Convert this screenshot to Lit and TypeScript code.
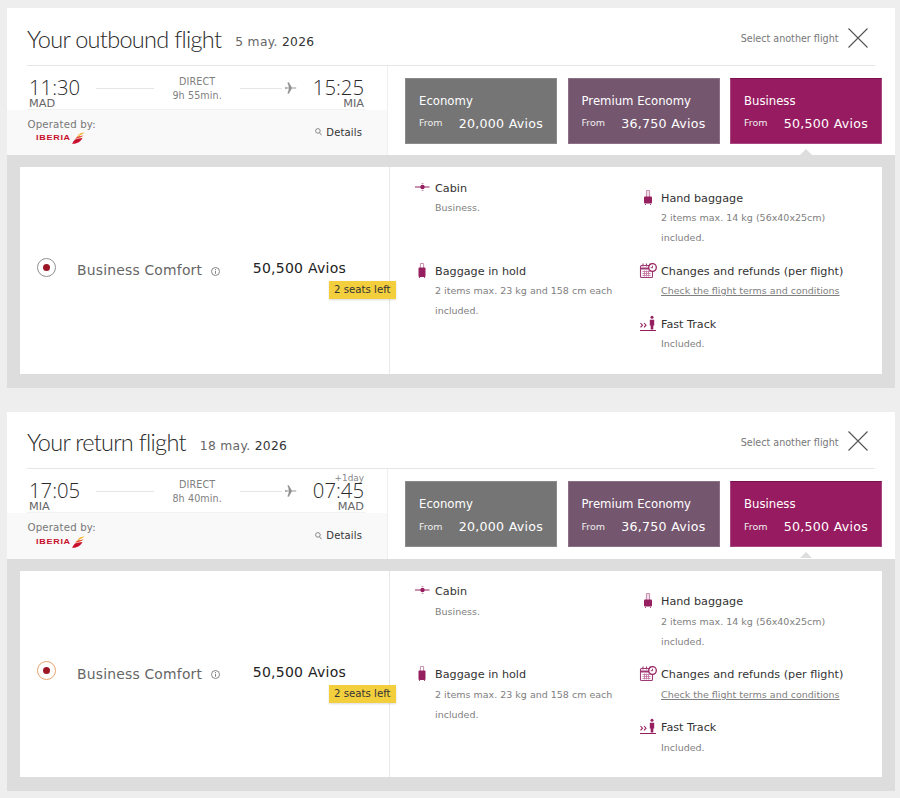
import { LitElement, html, css } from "lit";
import { customElement, property } from "lit/decorators.js";

const suitcase = (tall: boolean) => html`<svg class="ic" width="20" height="18" viewBox="0 0 20 18">
  <path d="M8.400 ${tall ? 7 : 8}V1.500h3.200V${tall ? 7 : 8}" fill="${tall ? "none" : "#f0dbe7"}" stroke="#c48fae" stroke-width="1"/>
  <rect x="${tall ? 6.5 : 6}" y="${tall ? 5.5 : 7.5}" width="${tall ? 7 : 8}" height="${tall ? 9.5 : 7}" rx="1" fill="#96205f"/>
  <path d="M7.500 15v1M12.500 15v1" stroke="#96205f" stroke-width=".8"/>
</svg>`;

const cabin = html`<svg class="ic" width="20" height="14" viewBox="0 0 20 14">
  <path d="M3 8h14.500" stroke="#96205f" stroke-width="1"/>
  <circle cx="10.500" cy="8" r="2.200" fill="#96205f"/>
  <path d="M9.500 4.500h2M9.500 11.500h2" stroke="#c99ab4" stroke-width="1.200"/>
</svg>`;

const calendar = html`<svg class="ic" width="20" height="18" viewBox="0 0 20 18">
  <rect x="2.500" y="3.500" width="12" height="12" rx="1" fill="#fff" stroke="#a03a75" stroke-width="1.100"/>
  <path d="M2.500 6.500h12" stroke="#a03a75" stroke-width="2"/>
  <path d="M5 1.500v3M8.500 1.500v3M12 1.500v3" stroke="#a03a75" stroke-width="1.100"/>
  <path d="M4.500 9.500h8M4.500 11.500h8M4.500 13.500h8M6.500 8.500v6M8.500 8.500v6M10.500 8.500v6" stroke="#c67aa6" stroke-width=".9"/>
  <circle cx="14.500" cy="5.500" r="3.800" fill="#fff" stroke="#96205f" stroke-width="1.300"/>
  <path d="M14.500 3.700v2h-1.800" fill="none" stroke="#96205f" stroke-width=".9"/>
</svg>`;

const fast = html`<svg class="ic" width="20" height="18" viewBox="0 0 20 18">
  <path d="M2.500 8l2 2.200-2 2.200M6 8l2 2.200-2 2.200" fill="none" stroke="#96205f" stroke-width="1.100"/>
  <circle cx="14" cy="2.300" r="1.500" fill="#96205f"/>
  <path d="M11.800 4.800h4.400v5.800h-.9v3.900h-2.600v-3.900h-.9z" fill="#96205f"/>
  <path d="M2 15.500h16" stroke="#96205f" stroke-width="1"/>
</svg>`;

const plane = html`<svg class="plane" width="12" height="12" viewBox="0 0 12 12">
  <path d="M0 5.200h1l1 .6h2.200L2.700 0.600h1.100l3 5.200h2.900c.9 0 1.600.1 1.600.2s-.7.2-1.600.2H6.800l-3 5.200H2.700l1.500-5.200H2l-1 .6H0l.6-.8z" fill="#8e8e8e" stroke="#8e8e8e" stroke-width=".3"/>
</svg>`;

@customElement("flight-card")
class FlightCard extends LitElement {
  @property() heading = "";
  @property() day = "";
  @property() dep = "";
  @property() depCode = "";
  @property() arr = "";
  @property() arrCode = "";
  @property() dur = "";
  @property() extra = "";
  @property() ring = "#8f8f8f";

  static styles = css`
    :host { display: block; font-family: "DejaVu Sans", Verdana, sans-serif; color: #222; }
    .top { background: #fff; height: 57.6px; padding: 0 20px; display: flex; }
    .top-in { flex: 1; display: flex; align-items: center; border-bottom: 1px solid #e6e6e6; padding: 5px 7px 0 0; box-sizing: border-box; }
    h2 { margin: 0; padding-top: 1px; font: 300 23.5px/1 Lato, sans-serif; color: #2a2a2a; letter-spacing: -.7px; }
    .date { margin-left: 14px; font-size: 12.3px; color: #666; padding-top: 7px; letter-spacing: .3px; }
    .date b { font-weight: 400; color: #333; }
    .sel { margin-left: auto; font-size: 9.6px; color: #777; }
    .x { margin: 0 0 2px 9.5px; display: block; }
    .row { display: flex; background: #fff; height: 89.4px; }
    .left { width: 380px; border-right: 1px solid #efefef; display: flex; flex-direction: column; }
    .times { height: 44px; margin: 0 21px 0 20px; display: flex; align-items: flex-end; border-bottom: 1px solid #f2f2f2; box-sizing: border-box; }
    .t { display: flex; flex-direction: column; padding: 0 2px; margin-bottom: -1px; }
    .t.r { text-align: right; margin-left: auto; }
    .hm { font: 300 20.3px/16px "Open Sans", sans-serif; color: #2a2a2a; }
    .code { font-size: 11.3px; line-height: 12px; color: #666; margin-top: 3px; }
    .plus { font-size: 8.9px; color: #888; line-height: 6px; margin-bottom: 1px; }
    .ln { height: 1px; background: #e6e6e6; align-self: flex-start; margin-top: 22px; }
    .ln.a { width: 58px; margin-left: 14px; }
    .ln.b { width: 42px; }
    .plane { align-self: flex-start; margin: 16px 0 0 3px; }
    .mid { width: 86px; text-align: center; align-self: flex-start; font-size: 9.6px; line-height: 14px; color: #808080; padding-top: 9px; letter-spacing: .1px; }
    .ops { flex: 1; background: #f9f9f9; display: flex; padding: 0 25px 0 20.5px; justify-content: space-between; }
    .op { font-size: 10.2px; color: #777; padding-top: 8px; line-height: 14px; letter-spacing: .17px; }
    .logo { display: flex; align-items: center; margin-left: 8px; height: 13px; }
    .logo span { font: 700 7.5px/1 "Liberation Sans", sans-serif; color: #c8102e; letter-spacing: .6px; transform: scaleX(1.2); transform-origin: left; width: 35px; }
    .det { display: flex; align-items: center; font-size: 10px; color: #333; height: 45px; letter-spacing: .15px; gap: 4px; }
    .fares { flex: 1; display: flex; padding: 12px 13px 0 17px; gap: 10.5px; }
    .fare { flex: 1; height: 66px; box-sizing: border-box; color: #fff; padding: 15px 13px 0; border: 1px solid; position: relative; }
    .fare.e { background: #757575; border-color: #8b8b8b; }
    .fare.p { background: #75566f; border-color: #8c7086; }
    .fare.b { background: #971b60; border-color: #a84880; border-top-color: #7a1050; }
    .fn { font-size: 11.7px; line-height: 14px; }
    .fp { display: flex; justify-content: space-between; align-items: center; margin-top: 8px; }
    .fr { font-size: 9.5px; color: #eee; margin-top: -2px; }
    .fa { font-size: 12.6px; line-height: 16px; letter-spacing: .25px; }
    .fare.b::after { content: ""; position: absolute; left: 69px; bottom: -12px; border: 6px solid transparent; border-top: 0; border-bottom-color: #ddd; }
    .panel { background: #ddd; padding: 12px 13px 14px; }
    .inner { background: #fff; display: flex; height: 206.6px; }
    .offer { width: 370px; border-right: 1px solid #e8e8e8; box-sizing: border-box; position: relative; display: flex; align-items: center; padding-left: 17px; }
    .radio { width: 19px; height: 19px; border: 1px solid; border-radius: 50%; box-sizing: border-box; display: flex; align-items: center; justify-content: center; margin-top: -6px; }
    .radio i { width: 7px; height: 7px; border-radius: 50%; background: #9d1626; display: block; }
    .name { margin-left: 21px; font-size: 13.9px; color: #666; letter-spacing: .2px; }
    .info { margin-left: 9px; margin-top: 2px; display: block; }
    .pr { margin-left: auto; align-self: flex-start; margin-top: 91px; font-size: 14px; color: #222; margin-right: 43px; letter-spacing: .25px; line-height: 20px; }
    .seats { position: absolute; left: 309px; top: 114px; background: #f4cf3d; font-size: 10.2px; color: #333; padding: 0 5px; line-height: 18px; white-space: nowrap; box-shadow: 0 1px 2px rgba(0,0,0,.15); }
    .info-cols { flex: 1; display: flex; padding-left: 24px; }
    .col { display: flex; flex-direction: column; }
    .c1 { width: 226px; padding-top: 11.6px; }
    .c2 { padding-top: 21.6px; }
    .it { position: relative; padding-left: 21px; }
    .ic { position: absolute; left: -2px; top: 0; display: block; }
    .c1 .it + .it { margin-top: 43.5px; }
    .c2 .it + .it { margin-top: 13.6px; }
    .tt { font-size: 11.2px; line-height: 19.5px; color: #333; white-space: nowrap; }
    .ds { font-size: 9.5px; line-height: 20px; color: #808080; white-space: nowrap; }
    .ds a { color: #808080; text-decoration: underline; }
  `;

  render() {
    const item = (icon: unknown, t: string, d: unknown) => html`<div class="it">${icon}<div class="tt">${t}</div><div class="ds">${d}</div></div>`;
    const fare = (k: string, n: string, a: string) => html`<div class="fare ${k}"><div class="fn">${n}</div><div class="fp"><span class="fr">From</span><span class="fa">${a} Avios</span></div></div>`;
    return html`
      <div class="top"><div class="top-in">
        <h2>${this.heading}</h2>
        <div class="date">${this.day} <b>2026</b></div>
        <div class="sel">Select another flight</div>
        <svg class="x" width="20" height="20" viewBox="0 0 20 20"><path d="M.5.5l19 19M19.500.5l-19 19" stroke="#555" stroke-width="1.100"/></svg>
      </div></div>
      <div class="row">
        <div class="left">
          <div class="times">
            <div class="t"><span class="hm">${this.dep}</span><span class="code">${this.depCode}</span></div>
            <div class="ln a"></div>
            <div class="mid">DIRECT<br />${this.dur}</div>
            <div class="ln b"></div>
            ${plane}
            <div class="t r">${this.extra ? html`<span class="plus">${this.extra}</span>` : ""}<span class="hm">${this.arr}</span><span class="code">${this.arrCode}</span></div>
          </div>
          <div class="ops">
            <div class="op">Operated by:
              <div class="logo"><span>IBERIA</span>
                <svg width="14" height="12" viewBox="0 0 14 12"><path d="M9 1.500c1.500-.5 3-.8 4.500-.9C12.500 1.500 11 2.500 9.500 3 8.500 3.400 7.500 3.800 6.500 4.500 7 3.300 8 2.100 9 1.500z" fill="#f2b632"/><path d="M6 4.800c2-.8 4.500-1.200 6.500-1.300-1 1-3 2.100-5 2.500-1.300.3-2.300.6-3.200 1 .4-.9 1-1.700 1.700-2.200z" fill="#e2542a"/><path d="M4 7.600c2.500-1 5-1.600 7.500-1.700C10.500 8 8.500 10 6 11c-2 .7-3.500 .8-5 .8C2 10.500 2.800 8.600 4 7.600z" fill="#c8102e"/></svg>
              </div>
            </div>
            <div class="det"><svg width="7" height="8" viewBox="0 0 7 8"><circle cx="2.900" cy="2.900" r="2.300" fill="none" stroke="#888"/><path d="M4.500 4.700L6.600 7.300" stroke="#888"/></svg>Details</div>
          </div>
        </div>
        <div class="fares">
          ${fare("e", "Economy", "20,000")}
          ${fare("p", "Premium Economy", "36,750")}
          ${fare("b", "Business", "50,500")}
        </div>
      </div>
      <div class="panel"><div class="inner">
        <div class="offer">
          <div class="radio" style="border-color:${this.ring}"><i></i></div>
          <span class="name">Business Comfort</span>
          <svg class="info" width="9" height="9" viewBox="0 0 9 9"><circle cx="4.500" cy="4.500" r="4" fill="none" stroke="#777" stroke-width=".9"/><path d="M4.500 3.800v3M4.500 2v1" stroke="#777" stroke-width=".9"/></svg>
          <span class="pr">50,500 Avios</span>
          <div class="seats">2 seats left</div>
        </div>
        <div class="info-cols">
          <div class="col c1">
            ${item(cabin, "Cabin", "Business.")}
            ${item(suitcase(true), "Baggage in hold", html`2 items max. 23 kg and 158 cm each<br />included.`)}
          </div>
          <div class="col c2">
            ${item(suitcase(false), "Hand baggage", html`2 items max. 14 kg (56x40x25cm)<br />included.`)}
            ${item(calendar, "Changes and refunds (per flight)", html`<a>Check the flight terms and conditions</a>`)}
            ${item(fast, "Fast Track", "Included.")}
          </div>
        </div>
      </div></div>
    `;
  }
}

@customElement("app-root")
class AppRoot extends LitElement {
  static styles = css`
    :host { display: block; background: #eee; min-height: 798px; }
    .wrap { display: flex; flex-direction: column; gap: 24px; padding: 8px 5px 6px 7px; }
  `;
  render() {
    return html`<div class="wrap">
      <flight-card heading="Your outbound flight" day="5 may." dep="11:30" depCode="MAD" arr="15:25" arrCode="MIA" dur="9h 55min."></flight-card>
      <flight-card heading="Your return flight" day="18 may." dep="17:05" depCode="MIA" arr="07:45" arrCode="MAD" dur="8h 40min." extra="+1day" ring="#e9a36c"></flight-card>
    </div>`;
  }
}
